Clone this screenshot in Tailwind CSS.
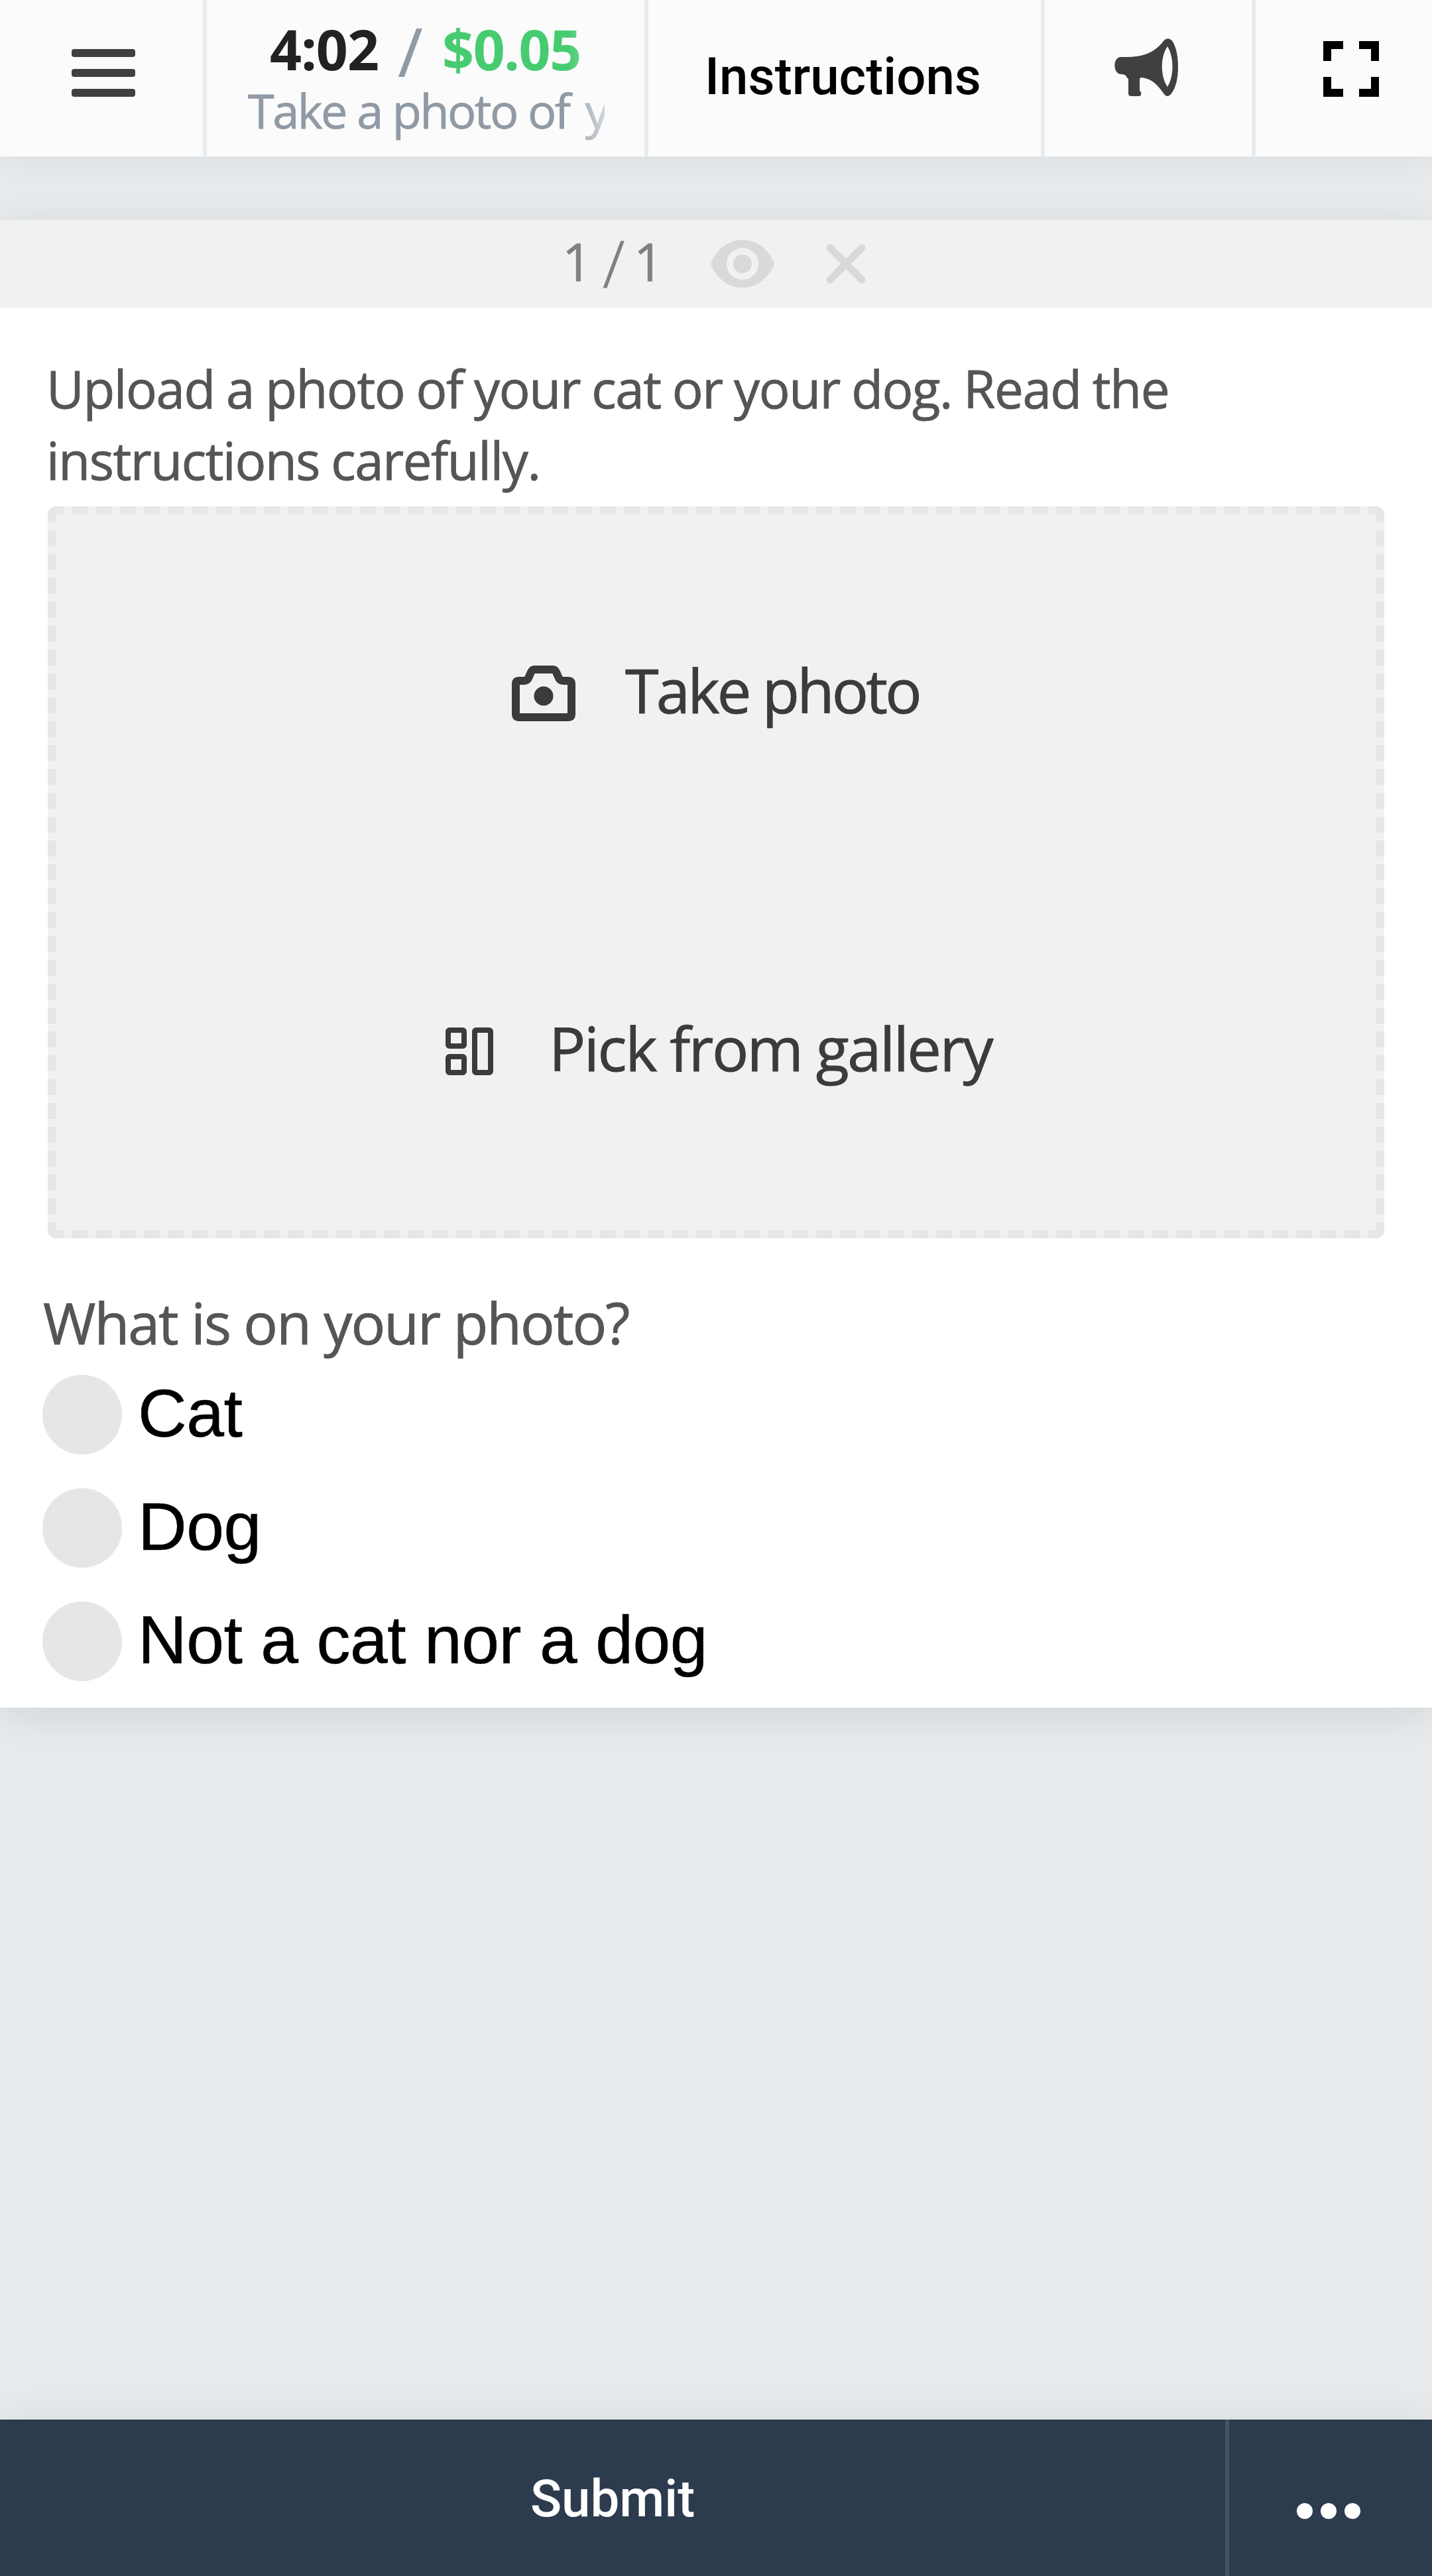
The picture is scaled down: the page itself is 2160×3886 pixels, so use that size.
<!DOCTYPE html>
<html lang="en">
<head>
<meta charset="utf-8">
<title>Task</title>
<script src="https://cdn.jsdelivr.net/npm/@tailwindcss/browser@4"></script>
</head>
<body class="w-[2160px] h-[3886px] flex flex-col bg-[#e7ebee] overflow-hidden font-['Open_Sans',sans-serif]">
<header class="relative z-10 h-[236px] shrink-0 flex bg-[#fbfbfb] shadow-[0_6px_48px_rgba(0,0,0,0.06)]">
  <button class="w-[312px] h-full flex flex-col items-start gap-[18px] pl-[108px] pt-[74px] border-r-[6px] border-[#e7ebee]">
    <span class="w-24 h-3 rounded-[4px] bg-[#404040]"></span>
    <span class="w-24 h-3 rounded-[4px] bg-[#404040]"></span>
    <span class="w-24 h-3 rounded-[4px] bg-[#404040]"></span>
  </button>
  <div class="w-[666px] h-full px-[60px] border-r-[6px] border-[#e7ebee]">
    <div class="relative h-full pt-[27px] overflow-hidden whitespace-nowrap">
      <div class="flex items-baseline h-[93px] pl-[35px] text-[84px] leading-[93px] font-bold font-['Noto_Sans',sans-serif]">
        <span class="w-[193px] text-[#222] tracking-[-0.9px]">4:02</span>
        <span class="relative top-[10px] w-[67px] text-[102px] leading-[76px] font-normal text-[#8f9aa5]">/</span>
        <span class="text-[#47cb71] tracking-[-1.4px]">$0.05</span>
      </div>
      <p class="mt-1 pl-[2px] text-[72px] leading-[84px] text-[#8f9aa5] tracking-[-2.5px] [-webkit-text-stroke:0.8px]">Take a photo of <span class="ml-[8px]">your pet</span></p>
      <div class="absolute right-[-36px] top-0 w-[90px] h-full bg-linear-to-r from-[#fbfbfb]/0 to-[#fbfbfb]"></div>
    </div>
  </div>
  <button class="w-[598px] h-full border-r-[6px] border-[#e7ebee] pr-[5px] flex justify-center text-[78px] leading-[231px] font-medium text-black font-['Roboto',sans-serif]">Instructions</button>
  <button class="w-[318px] h-full flex items-start border-r-[6px] border-[#e7ebee] pl-[105px] pt-[58px]">
    <svg class="w-[96px] h-[88px]" viewBox="0 0 96 88" fill="#404040"><path fill-rule="evenodd" d="M10 28H22C48 27 62 19 74 4C78-1 84-1 88 5C94 15 96 29 96 43C96 59 93 74 86 83C82 88 78 88 75 84C65 70 57 61 41 59Q38 59 38 62V77Q38 80 40 81C41 84 40 87 37 87H25Q21 87 21 83V61Q19 60 17 56Q15 54 11 54C-3 54-3 28 10 28ZM80 12C69 28 69 57 80 73C90 57 90 28 80 12Z"/></svg>
  </button>
  <button class="grow h-full flex items-start pl-[102px] pt-[62px]">
    <svg class="w-[84px] h-[84px]" viewBox="0 0 84 84" fill="none" stroke="#000" stroke-width="12"><path d="M6 30V6H30M54 6H78V30M78 54V78H54M30 78H6V54"/></svg>
  </button>
</header>
<main class="mt-24 h-[2244px] shrink-0 flex flex-col bg-white shadow-[0_12px_60px_rgba(0,0,0,0.1)]">
  <div class="h-[132px] shrink-0 flex items-start bg-[#f1f1f1] pl-[848px] text-[78px] leading-[124px] text-[#808080] [-webkit-text-stroke:0.8px]">
    <span class="w-[61px]">1</span>
    <span class="relative top-[10px] w-[47px] text-[98px] leading-[108px] font-light">/</span>
    <span class="w-[116px]">1</span>
    <svg class="mt-[30px] w-24 h-[72px]" viewBox="0 0 96 72"><path d="M48 0C72 0 90 18 96 36C90 54 72 72 48 72C24 72 6 54 0 36C6 18 24 0 48 0Z" fill="#d9d9d9"/><ellipse cx="48" cy="36" rx="19" ry="19" fill="none" stroke="#f1f1f1" stroke-width="10"/></svg>
    <svg class="ml-[78px] mt-9 w-[60px] h-[60px]" viewBox="0 0 60 60" stroke="#d9d9d9" stroke-width="11" stroke-linecap="round"><path d="M6 6L54 54M54 6L6 54"/></svg>
  </div>
  <p class="pt-[68px] pl-[70px] text-[78px] leading-[108px] text-[#555] tracking-[-1.41px] [word-spacing:-1.65px] [-webkit-text-stroke:0.9px]">Upload a photo of your cat or your dog. Read the<br>instructions carefully.</p>
  <div class="mx-[72px] mt-4 h-[1104px] shrink-0 rounded-[12px] border-[12px] border-dashed border-[#e6e6e6] bg-[#f1f1f1] text-[92px] leading-[120px] text-[#3b3b3b] [-webkit-text-stroke:0.9px]">
    <div class="h-[540px] flex items-start pt-[204px] pl-[688px]">
      <svg class="mt-6 w-24 h-[84px]" viewBox="0 0 96 84"><path d="M6 74V27Q6 23 10 23H18Q23 23 25 19L29 10Q31 6 34 6H62Q65 6 67 10L71 19Q73 23 78 23H86Q90 23 90 27V74Q90 78 86 78H10Q6 78 6 74Z" fill="none" stroke="#3b3b3b" stroke-width="12"/><circle cx="48" cy="46" r="14.5" fill="#3b3b3b"/></svg>
      <span class="ml-[75px] mt-px tracking-[-3.8px]">Take photo</span>
    </div>
    <div class="h-[540px] flex items-start pt-[204px] pl-[588px]">
      <svg class="mt-[30px] w-[72px] h-[72px]" viewBox="0 0 72 72" fill="none" stroke="#3b3b3b" stroke-width="8"><rect x="4" y="4" width="24" height="24" rx="2"/><rect x="4" y="44" width="24" height="24" rx="2"/><rect x="44" y="4" width="24" height="64" rx="2"/></svg>
      <span class="ml-[84px] mt-px tracking-[-2.5px]">Pick from gallery</span>
    </div>
  </div>
  <p class="mt-[77px] pl-[65px] text-[86px] leading-[100px] text-[#555] tracking-[-1.95px] [-webkit-text-stroke:0.9px]">What is on your photo?</p>
  <div class="mt-[29px] pl-16 flex flex-col gap-[51px] text-[102px] leading-[117px] text-black tracking-[-0.45px] font-['Liberation_Sans',sans-serif] [-webkit-text-stroke:0.6px]">
    <label class="h-[120px] flex"><span class="w-[120px] h-[120px] rounded-full bg-[#e6e6e6]"></span><span class="ml-[24px]">Cat</span></label>
    <label class="h-[120px] flex"><span class="w-[120px] h-[120px] rounded-full bg-[#e6e6e6]"></span><span class="ml-[24px]">Dog</span></label>
    <label class="h-[120px] flex"><span class="w-[120px] h-[120px] rounded-full bg-[#e6e6e6]"></span><span class="ml-[24px]">Not a cat nor a dog</span></label>
  </div>
</main>
<footer class="mt-auto h-[236px] shrink-0 flex bg-[#2c3b4e] shadow-[0_-6px_60px_rgba(0,0,0,0.06)]">
  <button class="w-[1854px] h-full border-r-[6px] border-[#465364] flex justify-center text-[78px] leading-[239px] font-medium text-white font-['Roboto',sans-serif]">Submit</button>
  <button class="grow h-full flex items-start gap-3 pt-[126px] pl-[102px]">
    <span class="w-6 h-6 rounded-full bg-white"></span>
    <span class="w-6 h-6 rounded-full bg-white"></span>
    <span class="w-6 h-6 rounded-full bg-white"></span>
  </button>
</footer>
</body>
</html>
